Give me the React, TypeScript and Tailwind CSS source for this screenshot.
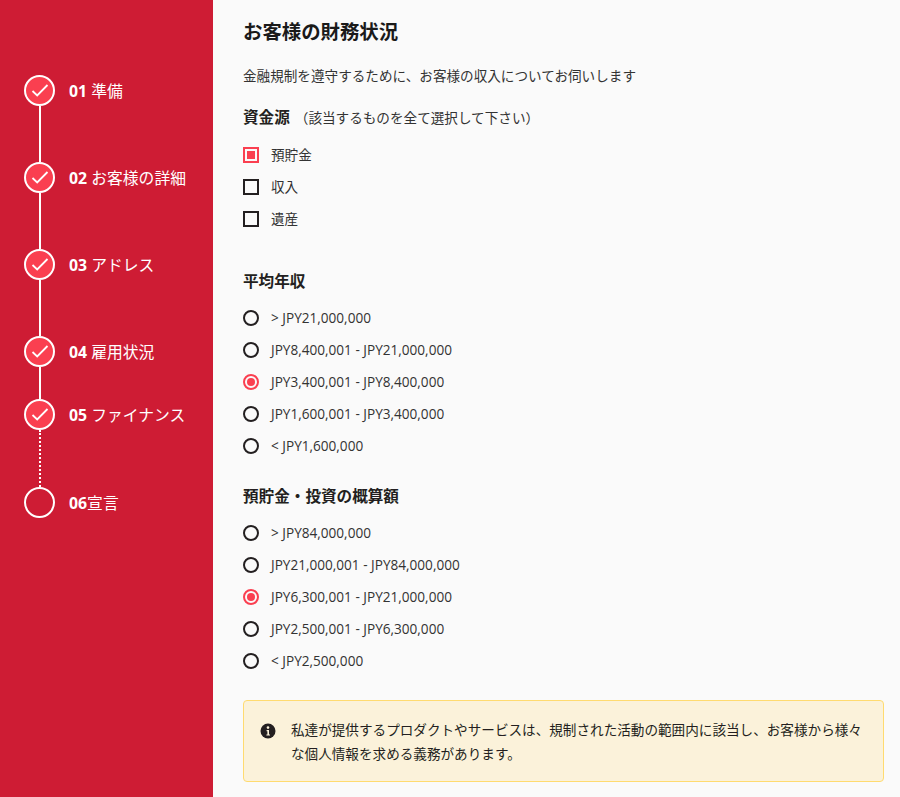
import React from 'react';

const font = { fontFamily: '"Open Sans", "Noto Sans CJK JP", sans-serif' };

const steps = [
  { num: '01', label: '準備', done: true, height: 'h-[87px]', gap: true },
  { num: '02', label: 'お客様の詳細', done: true, height: 'h-[87px]', gap: true },
  { num: '03', label: 'アドレス', done: true, height: 'h-[87px]', gap: true },
  { num: '04', label: '雇用状況', done: true, height: 'h-[63px]', gap: true },
  { num: '05', label: 'ファイナンス', done: true, height: 'h-[88px]', gap: true },
  { num: '06', label: '宣言', done: false, height: 'h-[31px]', gap: false },
];

const incomes = ['> JPY21,000,000', 'JPY8,400,001 - JPY21,000,000', 'JPY3,400,001 - JPY8,400,000', 'JPY1,600,001 - JPY3,400,000', '< JPY1,600,000'];
const savings = ['> JPY84,000,000', 'JPY21,000,001 - JPY84,000,000', 'JPY6,300,001 - JPY21,000,000', 'JPY2,500,001 - JPY6,300,000', '< JPY2,500,000'];

const Step = ({ step, dotted }: { step: (typeof steps)[number]; dotted: boolean }) => (
  <div className={`flex ${step.height}`}>
    <div className="flex w-[31px] flex-col items-center">
      <div className={`flex h-[31px] w-[31px] shrink-0 items-center justify-center rounded-full border-2 border-white ${step.done ? 'bg-[#fa3f50]' : ''}`}>
        {step.done && (
          <svg width="18" height="13" viewBox="0 0 18 13" fill="none" stroke="white" strokeWidth="1.8">
            <path d="M1.5 7 L6.2 11.5 L16.5 1" />
          </svg>
        )}
      </div>
      {step.gap && (dotted
        ? <div className="flex-1 border-l-2 border-dotted border-white" />
        : <div className="w-[2px] flex-1 bg-white" />)}
    </div>
    <div className="ml-[14px] mt-[4px] h-[24px] whitespace-nowrap text-[15.8px] leading-[24px] text-white">
      <span className="font-bold">{step.num}</span>
      {step.num === '06' ? '' : ' '}
      {step.label}
    </div>
  </div>
);

const Radio = ({ label, checked }: { label: string; checked?: boolean }) => (
  <div className="flex h-[32px] items-center">
    <div className={`flex h-[16px] w-[16px] items-center justify-center rounded-full border-2 ${checked ? 'border-[#fa3f50]' : 'border-[#231f20]'}`}>
      {checked && <div className="h-[8px] w-[8px] rounded-full bg-[#fa3f50]" />}
    </div>
    <span className="ml-[12px] text-[13.6px] text-[#333]">{label}</span>
  </div>
);

const Check = ({ label, checked }: { label: string; checked?: boolean }) => (
  <div className="flex h-[32px] items-center">
    <div className={`flex h-[16px] w-[16px] items-center justify-center border-2 ${checked ? 'border-[#fa3f50]' : 'border-[#231f20]'}`}>
      {checked && <div className="h-[8px] w-[8px] bg-[#fa3f50]" />}
    </div>
    <span className="ml-[12px] text-[13.6px] text-[#333]">{label}</span>
  </div>
);

export default function App() {
  return (
    <div className="flex h-[797px] w-[900px] overflow-hidden bg-[#fafafa]" style={font}>
      <aside className="w-[213px] shrink-0 bg-[#ce1c34] pl-[24px] pt-[75px]">
        {steps.map((s) => (
          <Step key={s.num} step={s} dotted={s.num === '05'} />
        ))}
      </aside>
      <main className="min-w-0 flex-1 pl-[30px] pr-[16px]">
        <h1 className="mt-[18px] text-[19.4px] font-bold leading-[27px] text-[#1a1a1a]">お客様の財務状況</h1>
        <p className="mt-[21px] text-[13.6px] leading-[20px] text-[#333]">金融規制を遵守するために、お客様の収入についてお伺いします</p>

        <div className="mt-[21px] flex h-[22px] items-center">
          <span className="text-[15.6px] font-bold text-[#231f20]">資金源</span>
          <span className="ml-[5px] text-[13.6px] text-[#333]">（該当するものを全て選択して下さい）</span>
        </div>
        <div className="mt-[10px]">
          <Check label="預貯金" checked />
          <Check label="収入" />
          <Check label="遺産" />
        </div>

        <h2 className="mt-[35px] h-[22px] text-[15.6px] font-bold leading-[22px] text-[#231f20]">平均年収</h2>
        <div className="mt-[10px]">
          {incomes.map((t, i) => <Radio key={t} label={t} checked={i === 2} />)}
        </div>

        <h2 className="mt-[23px] h-[22px] text-[15.6px] font-bold leading-[22px] text-[#231f20]">預貯金・投資の概算額</h2>
        <div className="mt-[10px]">
          {savings.map((t, i) => <Radio key={t} label={t} checked={i === 2} />)}
        </div>

        <div className="mt-[23px] flex h-[82px] items-start rounded-[4px] border border-[#ffdb70] bg-[#fbf2da] pl-[16px] pr-[20px] pt-[17px]">
          <svg className="mt-[5px] shrink-0" width="16" height="16" viewBox="0 0 16 16">
            <circle cx="8" cy="8" r="7.5" fill="#231f20" />
            <circle cx="8" cy="4.6" r="1.3" fill="#fbf2da" />
            <path d="M6.6 7h2.4v4.4h1v1.2H6.4v-1.2h1V8.2h-.8z" fill="#fbf2da" />
          </svg>
          <p className="ml-[15px] text-[13.6px] leading-[24px] text-[#231f20]">
            私達が提供するプロダクトやサービスは、規制された活動の範囲内に該当し、お客様から様々な個人情報を求める義務があります。
          </p>
        </div>
      </main>
    </div>
  );
}
